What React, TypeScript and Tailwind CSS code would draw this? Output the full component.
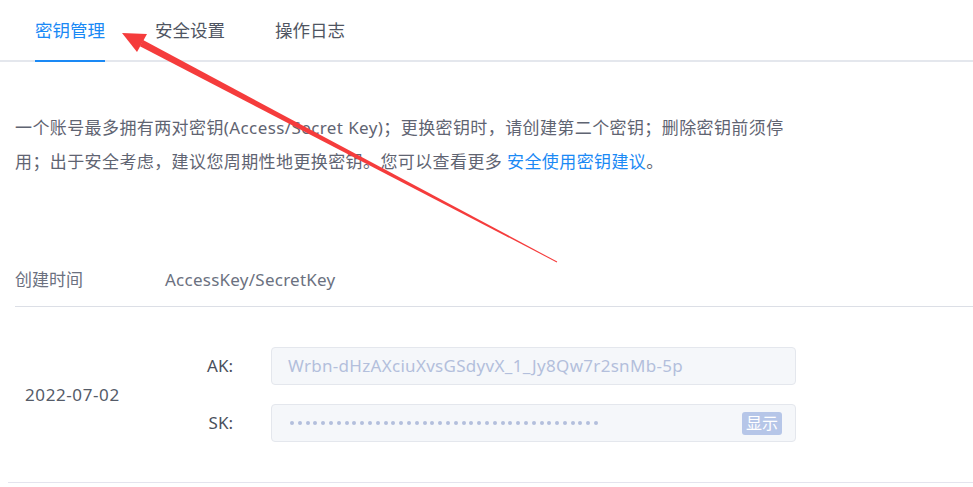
import React from 'react';

const tabs = ['密钥管理', '安全设置', '操作日志'];

export default function App() {
  return (
    <div className="relative h-[487px] w-[973px] overflow-hidden bg-white font-['Noto_Sans','Noto_Sans_CJK_SC',sans-serif] text-[#5f6472]">
      {/* Tabs */}
      <div className="flex border-b-2 border-[#e4e7ed] pl-[35px]">
        {tabs.map((t, i) => (
          <div
            key={t}
            className={
              i === 0
                ? 'mb-[-2px] mr-[50px] flex h-[62px] items-center border-b-2 border-[#1a89f5] text-[17.5px] text-[#1a89f5]'
                : 'mb-[-2px] mr-[50px] flex h-[62px] items-center border-b-2 border-transparent text-[17.5px] text-[#4f5562]'
            }
          >
            {t}
          </div>
        ))}
      </div>

      {/* Notice */}
      <p className="ml-[15px] mt-[49px] w-[820px] text-[17px] leading-[34px] tracking-[0.4px] text-[#5f6472]">
        一个账号最多拥有两对密钥(Access/Secret Key)；更换密钥时，请创建第二个密钥；删除密钥前须停
        <br />
        用；出于安全考虑，建议您周期性地更换密钥。您可以查看更多{' '}
        <a className="text-[#1a89f5]">安全使用密钥建议</a>。
      </p>

      {/* Table */}
      <div className="ml-[15px] mt-[74px]">
        <div className="flex h-[54px] items-center border-b border-[#dcdfe6] text-[17px] text-[#6b7180]">
          <span className="w-[150px]">创建时间</span>
          <span className="tracking-[0.25px]">AccessKey/SecretKey</span>
        </div>

        <div className="flex items-center pb-[40px] pt-[40px]">
          <span className="w-[150px] pl-[10px] text-[17px] tracking-[0.6px] text-[#555b68]">2022-07-02</span>
          <div className="flex flex-col gap-[19px]">
            <KeyRow label="AK:">
              <span className="text-[17px] tracking-[0.3px] text-[#b3bfdc]">Wrbn-dHzAXciuXvsGSdyvX_1_Jy8Qw7r2snMb-5p</span>
            </KeyRow>
            <KeyRow label="SK:">
              <div className="flex flex-1 items-center justify-between">
                <div className="ml-[2px] flex gap-[3.8px]">
                  {Array.from({ length: 40 }).map((_, i) => (
                    <span key={i} className="h-[4px] w-[4px] rounded-full bg-[#b3bfdc]" />
                  ))}
                </div>
                <button className="rounded-[3px] bg-[#b6c6e8] px-[4px] text-[16px] leading-[23px] text-white">
                  显示
                </button>
              </div>
            </KeyRow>
          </div>
        </div>
      </div>
      <div className="ml-[8px] h-px bg-[#e4e4ee]" />

      {/* Annotation arrow */}
      <svg className="pointer-events-none absolute left-0 top-0" width="973" height="487">
        <polygon points="122,33 147,34 137,52" fill="#f53c3c" />
        <polygon points="139.9,46.3 143.1,40.1 557.2,261.6 556.8,262.4" fill="#f53c3c" />
      </svg>
    </div>
  );
}

function KeyRow({ label, children }: { label: string; children: React.ReactNode }) {
  return (
    <div className="flex items-center">
      <span className="w-[68px] text-right text-[17px] text-[#4a4f5b]">{label}</span>
      <div className="ml-[38px] flex h-[38px] w-[525px] items-center rounded-[4px] border border-[#e4e7ed] bg-[#f5f7fa] pl-[16px] pr-[13px]">
        {children}
      </div>
    </div>
  );
}
